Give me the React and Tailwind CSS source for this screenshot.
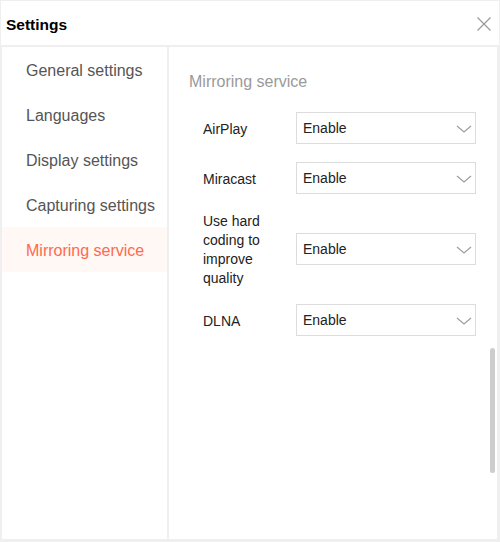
import React from "react";

const font = { fontFamily: '"Liberation Sans", Arial, sans-serif' };

function Chevron() {
  return (
    <svg width="16" height="8" viewBox="0 0 16 8" className="shrink-0">
      <path d="M1 1 L8 7 L15 1" fill="none" stroke="#a0a0a0" strokeWidth="1.3" />
    </svg>
  );
}

function Select() {
  return (
    <div className="w-[180px] h-[32px] border border-[#dcdcdc] bg-white flex items-center justify-between pl-[6px] pr-[3px] pt-[1px] text-[14px] text-[#222]">
      <span>Enable</span>
      <Chevron />
    </div>
  );
}

function Row({ label, tall }) {
  return (
    <div className={"flex items-center " + (tall ? "h-[74px]" : "h-[32px]")}>
      <div className="w-[108px] pl-[15px] pr-[12px] pt-[2px] text-[14px] leading-[19px] text-[#222]">{label}</div>
      <Select />
    </div>
  );
}

export default function App() {
  const items = ["General settings", "Languages", "Display settings", "Capturing settings", "Mirroring service"];
  return (
    <div className="w-[500px] h-[542px] bg-[#efefef] flex flex-col" style={font}>
      <div className="mx-[1px] mt-[1px] h-[44px] bg-white flex items-center justify-between pl-[5px] pr-[7px]">
        <span className="text-[15.5px] font-bold text-black pt-[3px]">Settings</span>
        <svg width="16" height="16" viewBox="0 0 16 16" className="mt-[1px]">
          <path d="M1.5 1.5 L14.5 14.5 M14.5 1.5 L1.5 14.5" stroke="#9a9a9a" strokeWidth="1.2" />
        </svg>
      </div>
      <div className="flex flex-1 mt-[2px] mb-[3px] gap-[2px]">
        <div className="ml-[2px] w-[165px] bg-white flex flex-col">
          {items.map((t, i) => (
            <div
              key={t}
              className={
                "h-[45px] flex items-center pl-[24px] pt-[2px] text-[16px] " +
                (i === 4 ? "bg-[#fff8f5] text-[#ff6a4d]" : "text-[#555]")
              }
            >
              {t}
            </div>
          ))}
        </div>
        <div className="flex-1 mr-[3px] bg-white relative">
          <div className="pl-[20px] pt-[25px] text-[16px] text-[#9a9a9a] leading-[20px]">Mirroring service</div>
          <div className="pl-[19px] pt-[20px] flex flex-col gap-[18px]">
            <Row label="AirPlay" />
            <Row label="Miracast" />
            <Row label="Use hard coding to improve quality" tall />
            <Row label="DLNA" />
          </div>
          <div className="absolute right-[2px] top-[301px] w-[5px] h-[125px] rounded-full bg-[#cdcdcd]" />
        </div>
      </div>
    </div>
  );
}
